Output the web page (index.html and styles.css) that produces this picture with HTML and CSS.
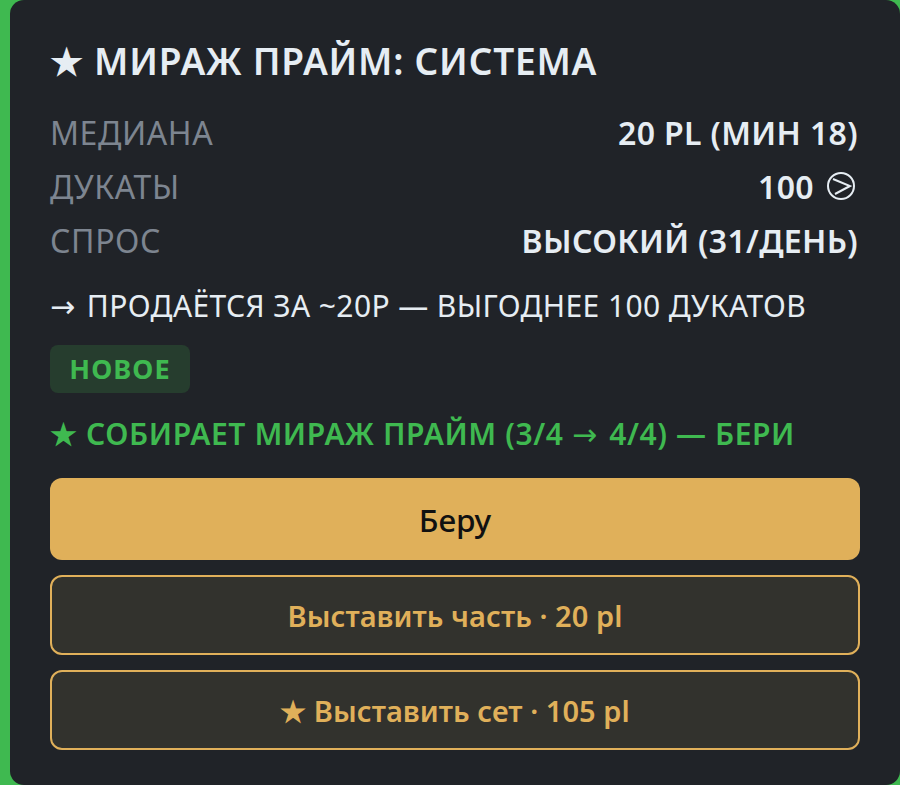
FILE: index.html
```html
<!DOCTYPE html>
<html lang="ru">
<head>
<meta charset="utf-8">
<title>Мираж Прайм: Система</title>
<link rel="stylesheet" href="styles.css">
</head>
<body>
<main class="card">
  <h1 class="title">★ Мираж Прайм: Система</h1>
  <dl class="stats">
    <div class="row"><dt>Медиана</dt><dd>20 pl (мин 18)</dd></div>
    <div class="row"><dt>Дукаты</dt><dd>100 <svg class="ducat" viewBox="0 0 28 28" aria-hidden="true"><circle cx="14" cy="14" r="13"/><path d="M6 7 23 14 8 22"/></svg></dd></div>
    <div class="row"><dt>Спрос</dt><dd>Высокий (31/день)</dd></div>
  </dl>
  <p class="note"><span class="arrow">→</span> Продаётся за ~20p — выгоднее 100 дукатов</p>
  <span class="badge">Новое</span>
  <p class="set">★ Собирает Мираж Прайм (3/4 <span class="arrow">→</span> 4/4) — бери</p>
  <div class="actions">
    <button class="btn primary">Беру</button>
    <button class="btn outline">Выставить часть · 20 pl</button>
    <button class="btn outline">★ Выставить сет · 105 pl</button>
  </div>
</main>
</body>
</html>
```
FILE: styles.css
```css
* { box-sizing: border-box; }
html, body { margin: 0; height: 100%; background: #3fb950; }
body { font-family: "Noto Sans", "Liberation Sans", sans-serif; }
.card {
  height: 785px;
  margin-left: 10px;
  padding: 36px 40px 0;
  background: #202328;
  border-radius: 14px;
  color: #e6edf3;
}
.title {
  margin: 0 0 23px;
  font-size: 37px;
  line-height: 50px;
  font-weight: 600;
  text-transform: uppercase;
  letter-spacing: 0.75px;
}
.stats { margin: 0; display: flex; flex-direction: column; gap: 8px; }
.row { display: flex; justify-content: space-between; align-items: center; height: 46px; font-size: 32px; text-transform: uppercase; letter-spacing: 0.6px; }
dt { color: #7d8590; }
dd { margin: 0; font-weight: 600; display: flex; align-items: center; gap: 13px; letter-spacing: 0.35px; padding-right: 2px; }
.ducat { width: 28px; height: 28px; margin-right: 3px; fill: none; stroke: #e6edf3; stroke-width: 2; }
.note { margin: 22px 0 18px; font-size: 30px; line-height: 42px; text-transform: uppercase; letter-spacing: 0.4px; }
.arrow { font-family: "DejaVu Sans", sans-serif; font-weight: 400; line-height: 0; margin-right: 3px; }
.badge {
  display: block;
  width: 140px; height: 48px;
  background: #263d2e;
  border-radius: 8px;
  color: #3fb950;
  font-size: 27px; line-height: 48px; font-weight: 700;
  text-align: center;
  text-transform: uppercase;
  letter-spacing: 1.1px;
}
.set { margin: 18px 0 21px; color: #3fb950; font-size: 30px; line-height: 46px; font-weight: 600; text-transform: uppercase; letter-spacing: 0.6px; }
.actions { display: flex; flex-direction: column; gap: 15px; }
.btn { width: 100%; font: inherit; border-radius: 12px; cursor: pointer; }
.primary { height: 82px; background: #e0b05a; border: 0; color: #111; font-size: 31.5px; font-weight: 550; }
.outline { height: 80px; background: #32322d; border: 2px solid #e0b05a; color: #e0b05a; font-size: 29px; font-weight: 600; letter-spacing: 0.05px; }
```
